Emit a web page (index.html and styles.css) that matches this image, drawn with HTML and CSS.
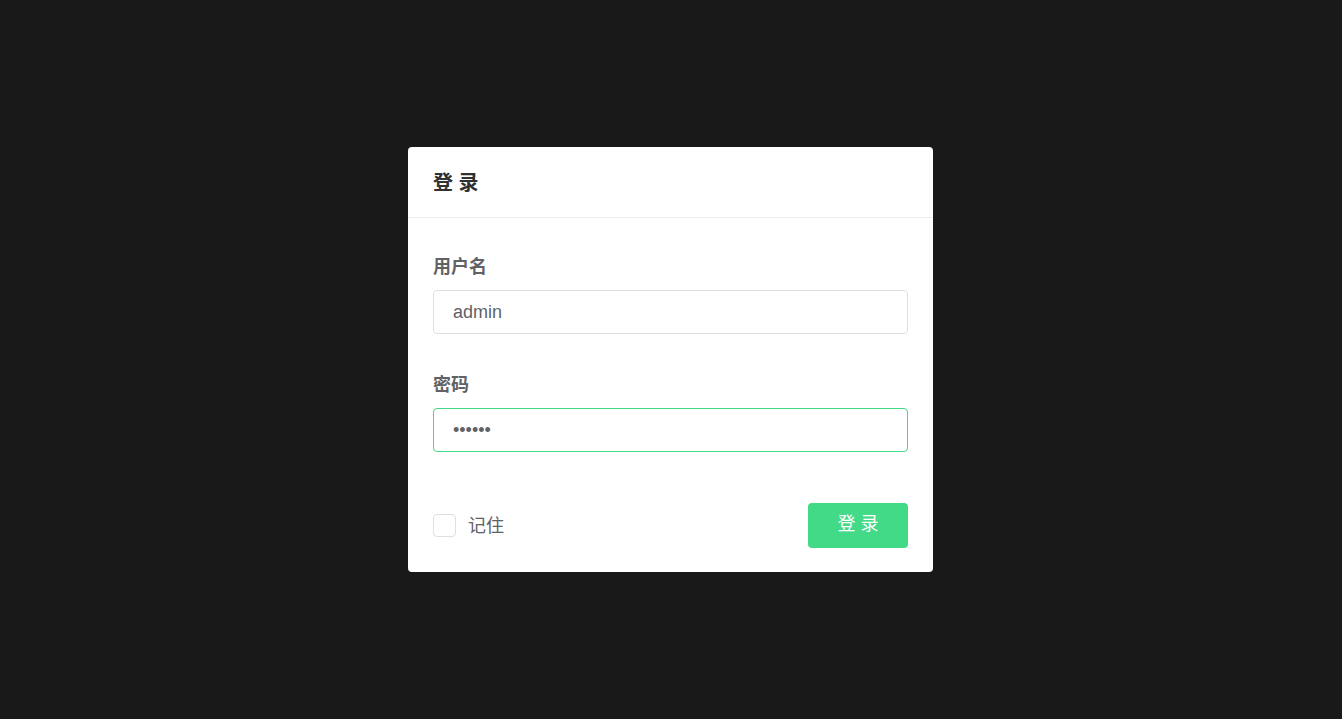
FILE: index.html
```html
<!DOCTYPE html>
<html lang="zh-CN">
<head>
<meta charset="utf-8">
<title>登录</title>
<link rel="stylesheet" href="styles.css">
</head>
<body>
<div class="page">
  <div class="card">
    <div class="card-header">
      <h2 class="title">登 录</h2>
    </div>
    <form class="card-body">
      <div class="field">
        <label class="label" for="username">用户名</label>
        <input class="input" id="username" type="text" value="admin">
      </div>
      <div class="field">
        <label class="label" for="password">密码</label>
        <input class="input input-active" id="password" type="password" value="123456">
      </div>
      <div class="footer">
        <label class="remember">
          <span class="checkbox"></span>
          <span class="remember-text">记住</span>
        </label>
        <button type="button" class="btn">登 录</button>
      </div>
    </form>
  </div>
</div>
</body>
</html>
```
FILE: styles.css
```css
* {
  box-sizing: border-box;
}

html, body {
  margin: 0;
  padding: 0;
  height: 100%;
}

body {
  background: #191919;
  font-family: "Liberation Sans", "Noto Sans CJK SC", sans-serif;
}

.page {
  height: 100%;
  display: flex;
  align-items: center;
  justify-content: center;
  padding-right: 1px;
}

.card {
  width: 525px;
  background: #ffffff;
  border-radius: 4px;
  overflow: hidden;
}

.card-header {
  height: 71px;
  padding: 0 25px;
  display: flex;
  align-items: center;
  border-bottom: 1px solid #ebeef5;
}

.title {
  margin: 0;
  font-size: 20px;
  font-weight: bold;
  color: #303133;
  line-height: 24px;
  padding-top: 2px;
}

.card-body {
  margin: 0;
  padding: 37px 25px 24px;
}

.field {
  display: flex;
  flex-direction: column;
  margin-bottom: 39px;
}

.field:nth-child(2) {
  margin-bottom: 0;
}

.label {
  font-size: 18px;
  line-height: 24px;
  font-weight: bold;
  color: #606266;
  margin-bottom: 11px;
}

.input {
  height: 44px;
  width: 100%;
  border: 1px solid #dcdfe6;
  border-radius: 4px;
  padding: 0 19px;
  font-family: "Liberation Sans", "Noto Sans CJK SC", sans-serif;
  font-size: 18px;
  color: #606266;
  background: #fff;
  outline: none;
}

.input-active {
  border-color: #42d987;
}

.footer {
  margin-top: 51px;
  display: flex;
  align-items: center;
  justify-content: space-between;
}

.remember {
  display: flex;
  align-items: center;
  gap: 12px;
}

.checkbox {
  width: 23px;
  height: 23px;
  border: 1px solid #dcdfe6;
  border-radius: 4px;
  background: #fff;
}

.remember-text {
  font-size: 18px;
  color: #606266;
  line-height: 24px;
}

.btn {
  width: 100px;
  height: 45px;
  border: none;
  border-radius: 4px;
  background: #42d987;
  color: #ffffff;
  font-family: "Liberation Sans", "Noto Sans CJK SC", sans-serif;
  font-size: 18px;
  line-height: 24px;
  padding: 0 0 3px;
  cursor: pointer;
}
```
